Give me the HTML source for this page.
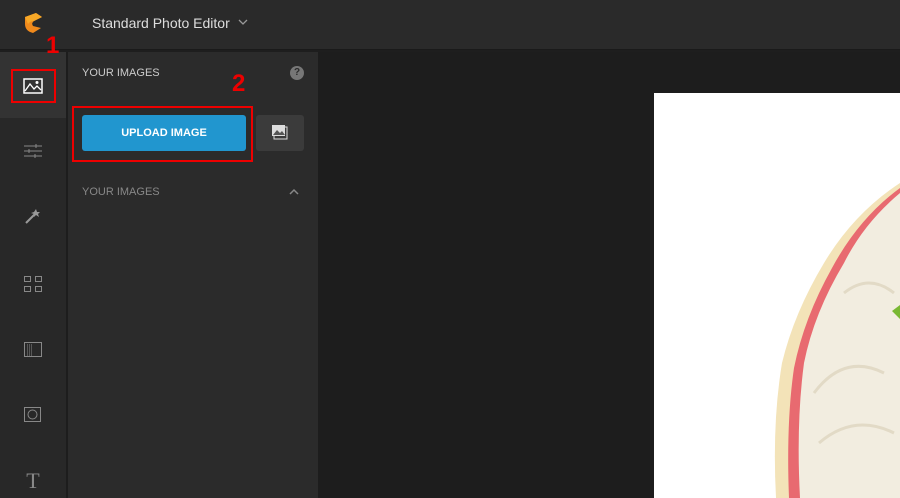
<!DOCTYPE html>
<html><head><style>
*{margin:0;padding:0;box-sizing:border-box}
html,body{width:900px;height:498px;overflow:hidden}
body{background:#1d1d1d;font-family:"Liberation Sans",sans-serif;position:relative}
.top{position:absolute;left:0;top:0;width:900px;height:50px;background:#2a2a2a;border-bottom:1px solid #1a1a1a}
.side{position:absolute;left:0;top:52px;width:66px;height:446px;background:#282828}
.panel{position:absolute;left:68px;top:52px;width:250px;height:446px;background:#2b2b2b}
</style></head><body>
<div class="top">
<svg style="position:absolute;left:23px;top:12px" width="20" height="22" viewBox="0 0 20 22"><path d="M2 5 L13 1 L19 5 L11 9 Q8 11 10 14 L18 16 L10 21 Q2 19 2 12Z" fill="#f08a1c"/><path d="M2 5 L13 1 L19 5 L11 9 Q7 9 5 12Z" fill="#f7a827"/></svg>
<div style="position:absolute;left:92px;top:15px;color:#ddd;font-size:14px">Standard Photo Editor</div>
<svg style="position:absolute;left:238px;top:19px" width="10" height="7" viewBox="0 0 10 7"><path d="M1 1l4 4 4-4" stroke="#999" fill="none" stroke-width="1.3"/></svg>
</div>
<div style="position:absolute;left:0;top:50px;width:900px;height:2px;background:#1e1e1e"></div>
<div class="side">
<div style="position:absolute;left:0;top:0;width:66px;height:66px;background:#333"></div>
<div style="position:absolute;left:11px;top:17px;width:45px;height:34px;border:2px solid #e00"></div>
<svg style="position:absolute;left:23px;top:26px" width="20" height="16" viewBox="0 0 20 16"><rect x="1" y="1" width="18" height="14" fill="none" stroke="#fff" stroke-width="1.5"/><path d="M2 13 L7 6 L11 11 L14 8 L18 12" fill="none" stroke="#fff" stroke-width="1.3"/><circle cx="14" cy="4.5" r="1.5" fill="#fff"/></svg>
<svg style="position:absolute;left:24px;top:92px" width="18" height="14" viewBox="0 0 18 14" stroke="#888" stroke-width="1"><path d="M0 2h18M0 7h18M0 12h18"/><path d="M12 0v4M5 5v4M11 10v4"/></svg>
<svg style="position:absolute;left:24px;top:156px" width="16" height="16" viewBox="0 0 16 16"><path d="M2 15L11 6" stroke="#999" stroke-width="2"/><path d="M12 1l1 3 3 0-2 2 1 3-3-2-2 2 0-3-3-1 3-1z" fill="#999"/></svg>
<svg style="position:absolute;left:24px;top:224px" width="18" height="16" viewBox="0 0 18 16" fill="none" stroke="#888"><rect x="0.5" y="0.5" width="6" height="5"/><rect x="11.5" y="0.5" width="6" height="5"/><rect x="0.5" y="10.5" width="6" height="5"/><rect x="11.5" y="10.5" width="6" height="5"/></svg>
<svg style="position:absolute;left:24px;top:290px" width="18" height="15" viewBox="0 0 18 15" fill="none" stroke="#888"><rect x="0.5" y="0.5" width="17" height="14"/><path d="M3 3h6M3 5h6M3 7h6M3 9h6M3 11h6M3 13h6" stroke-dasharray="1 1"/></svg>
<svg style="position:absolute;left:24px;top:355px" width="17" height="15" viewBox="0 0 17 15" fill="none" stroke="#888"><rect x="0.5" y="0.5" width="16" height="14"/><circle cx="8.5" cy="7.5" r="4.5"/></svg>
<div style="position:absolute;left:0;top:416px;width:66px;text-align:center;color:#888;font-family:'Liberation Serif',serif;font-size:22px">T</div>
</div>
<div style="position:absolute;left:46px;top:32px;color:#e00;font-size:24px;font-weight:bold">1</div>
<div class="panel">
<div style="position:absolute;left:14px;top:15px;color:#ccc;font-size:11px">YOUR IMAGES</div>
<div style="position:absolute;left:222px;top:14px;width:14px;height:14px;border-radius:7px;background:#777;color:#2b2b2b;font-size:10px;font-weight:bold;text-align:center;line-height:14px">?</div>
<div style="position:absolute;left:164px;top:18px;color:#e00;font-size:24px;font-weight:bold">2</div>
<div style="position:absolute;left:4px;top:54px;width:181px;height:56px;border:2px solid #e00"></div>
<div style="position:absolute;left:14px;top:63px;width:164px;height:36px;background:#2196cf;border-radius:3px;color:#fff;font-size:11px;font-weight:bold;text-align:center;line-height:36px">UPLOAD IMAGE</div>
<div style="position:absolute;left:188px;top:63px;width:48px;height:36px;background:#3b3b3b;border-radius:3px"></div>
<svg style="position:absolute;left:204px;top:73px" width="16" height="15" viewBox="0 0 16 15"><rect x="2" y="2" width="13" height="12" fill="none" stroke="#ddd"/><rect x="0" y="0" width="13" height="11" fill="#ddd"/><path d="M1 10L5 5l3 3 2-2 3 4z" fill="#555"/></svg>
<div style="position:absolute;left:14px;top:134px;color:#888;font-size:11px">YOUR IMAGES</div>
<svg style="position:absolute;left:221px;top:136px" width="10" height="7" viewBox="0 0 10 7"><path d="M1 6l4-4 4 4" stroke="#888" fill="none" stroke-width="1.5"/></svg>
</div>
<div style="position:absolute;left:654px;top:93px;width:246px;height:405px;background:#fff;overflow:hidden">
<svg width="246" height="405" viewBox="0 0 246 405" style="position:absolute;left:0;top:0">
<path d="M246 90 Q200 120 170 170 Q140 220 128 270 Q118 330 122 405 L246 405Z" fill="#f3e3b8"/>
<path d="M246 95 Q205 125 178 175 Q150 225 140 275 Q132 330 135 405 L246 405Z" fill="#e86a70"/>
<path d="M246 100 Q210 130 190 170 Q160 220 150 270 Q142 330 146 405 L246 405Z" fill="#f2ede0"/>
<path d="M160 300 Q190 260 230 280 M165 350 Q200 320 240 340 M190 200 Q215 180 240 200" stroke="#e2dac6" stroke-width="3" fill="none"/>
<path d="M238 218 L246 212 L246 226Z" fill="#7ab833"/>
</svg>
</div>
</body></html>
